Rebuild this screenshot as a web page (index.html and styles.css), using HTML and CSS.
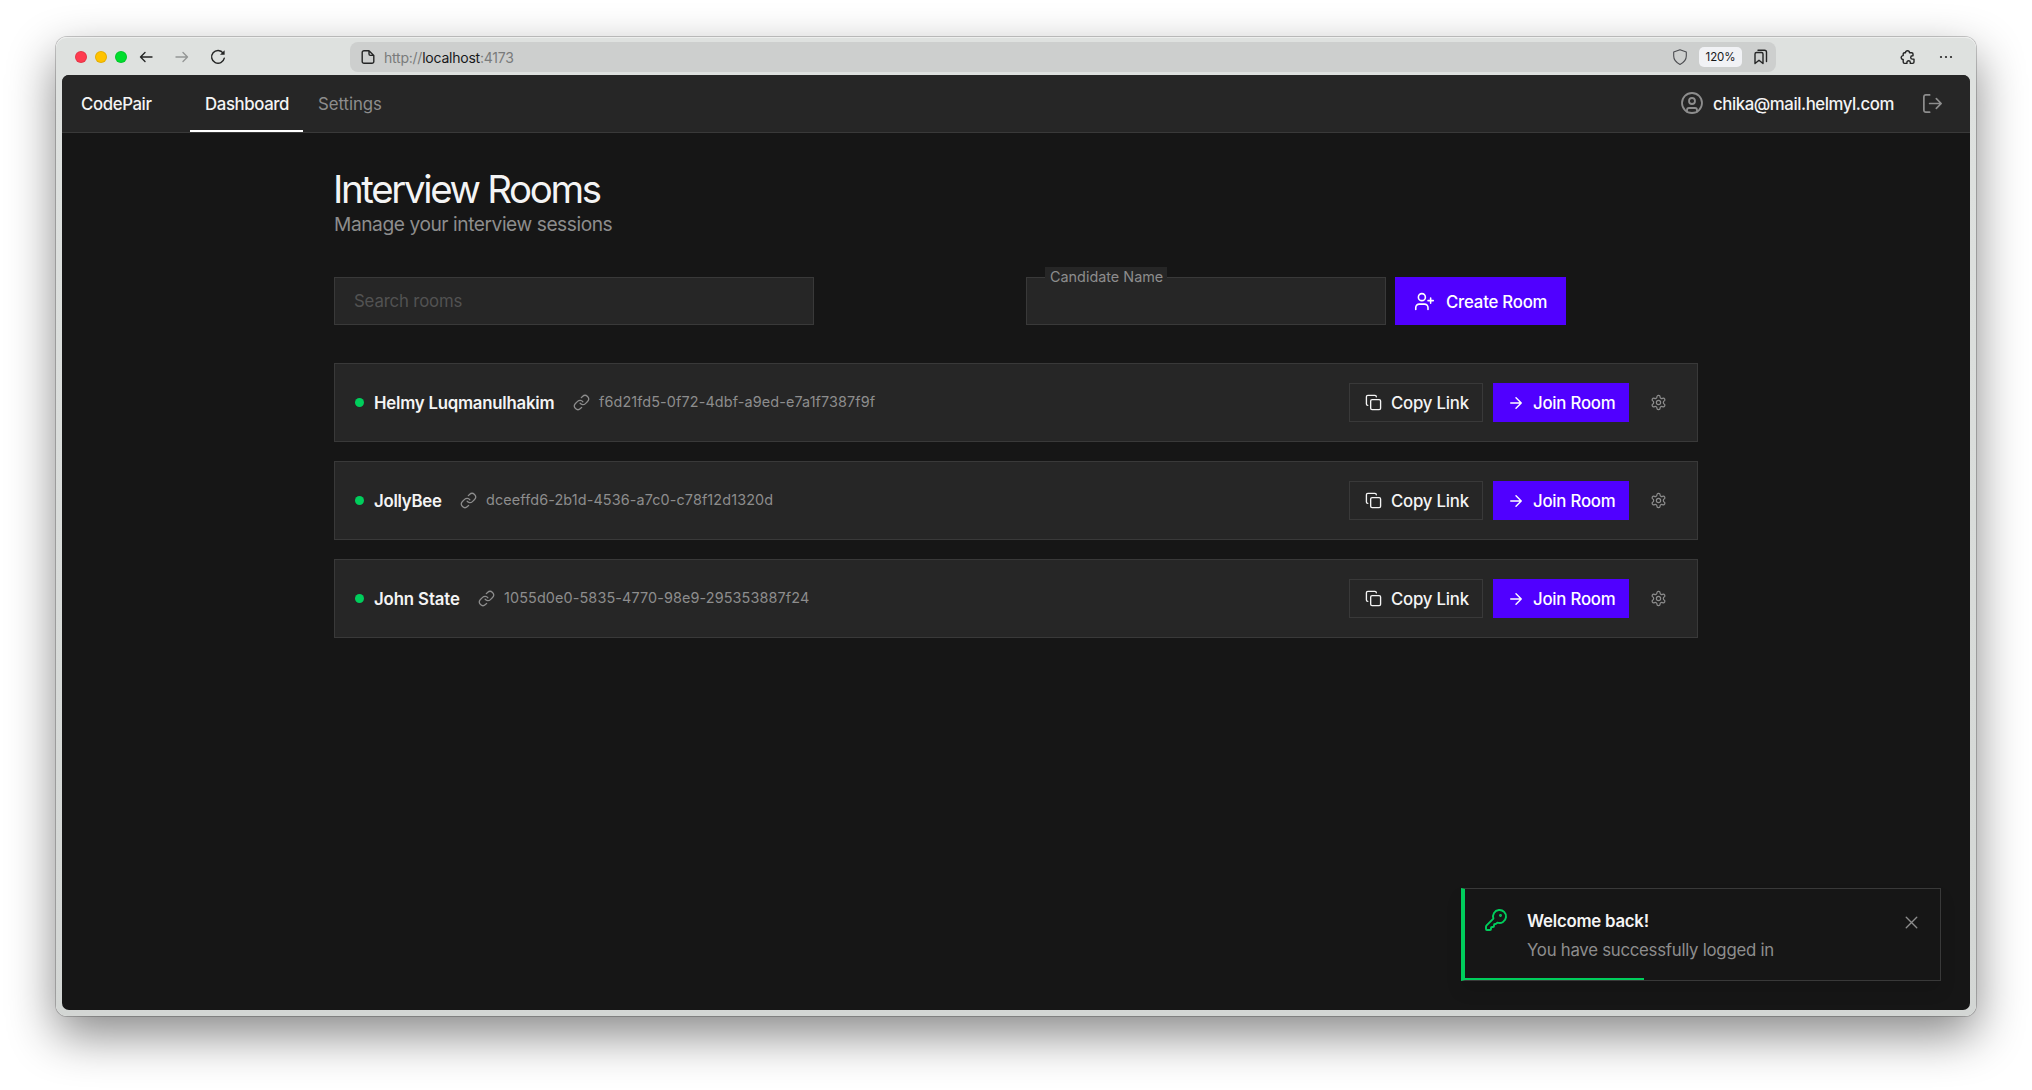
FILE: index.html
```html
<!DOCTYPE html>
<html lang="en">
<head>
<meta charset="utf-8">
<title>CodePair</title>
<link rel="stylesheet" href="styles.css">
</head>
<body>
<svg class="sprite" width="0" height="0" aria-hidden="true">
  <symbol id="link" viewBox="0 0 24 24"><path d="M10 13a5 5 0 0 0 7.54.54l3-3a5 5 0 0 0-7.07-7.07l-1.72 1.71"/><path d="M14 11a5 5 0 0 0-7.54-.54l-3 3a5 5 0 0 0 7.07 7.07l1.71-1.71"/></symbol>
  <symbol id="copy" viewBox="0 0 24 24"><rect x="8" y="8" width="14" height="14" rx="2"/><path d="M4 16c-1.1 0-2-.9-2-2V4c0-1.1.9-2 2-2h10c1.1 0 2 .9 2 2"/></symbol>
  <symbol id="arrow" viewBox="0 0 24 24"><path d="M5 12h14M12 5l7 7-7 7"/></symbol>
  <symbol id="gear" viewBox="0 0 24 24"><path d="M12.22 2h-.44a2 2 0 0 0-2 2v.18a2 2 0 0 1-1 1.73l-.43.25a2 2 0 0 1-2 0l-.15-.08a2 2 0 0 0-2.73.73l-.22.38a2 2 0 0 0 .73 2.73l.15.1a2 2 0 0 1 1 1.72v.51a2 2 0 0 1-1 1.74l-.15.09a2 2 0 0 0-.73 2.73l.22.38a2 2 0 0 0 2.73.73l.15-.08a2 2 0 0 1 2 0l.43.25a2 2 0 0 1 1 1.73V20a2 2 0 0 0 2 2h.44a2 2 0 0 0 2-2v-.18a2 2 0 0 1 1-1.73l.43-.25a2 2 0 0 1 2 0l.15.08a2 2 0 0 0 2.73-.73l.22-.39a2 2 0 0 0-.73-2.73l-.15-.08a2 2 0 0 1-1-1.74v-.5a2 2 0 0 1 1-1.74l.15-.09a2 2 0 0 0 .73-2.73l-.22-.38a2 2 0 0 0-2.73-.73l-.15.08a2 2 0 0 1-2 0l-.43-.25a2 2 0 0 1-1-1.73V4a2 2 0 0 0-2-2z"/><circle cx="12" cy="12" r="3"/></symbol>
</svg>
<div class="window">
  <div class="toolbar">
    <div class="lights"><i class="light red"></i><i class="light yellow"></i><i class="light green"></i></div>
    <svg class="tool back" viewBox="0 0 16 16"><path d="M14 8H2.5M7 3.5L2.5 8 7 12.5"/></svg>
    <svg class="tool forward" viewBox="0 0 16 16"><path d="M2 8h11.5M9 3.5L13.5 8 9 12.5"/></svg>
    <svg class="tool reload" viewBox="0 0 16 16"><path d="M13.2 4.1A6.4 6.4 0 1 0 14.3 9.2"/><path d="M14.6 1.2v4.6H10z" fill="currentColor" stroke="none"/></svg>
    <div class="address">
      <svg class="tool" viewBox="0 0 16 16"><path d="M9 1.8H4a1.8 1.8 0 0 0-1.8 1.8v8.8A1.8 1.8 0 0 0 4 14.2h8a1.8 1.8 0 0 0 1.8-1.8V6.4zM9 1.8v3.2a1.4 1.4 0 0 0 1.4 1.4h3.4"/></svg>
      <span class="url">http://<b>localhost</b>:4173</span>
      <svg class="tool shield" viewBox="0 0 16 16"><path d="M8 .8L14.3 3.1V7c0 3.8-2.4 6.5-6.3 8.4C4.1 13.5 1.7 10.8 1.7 7V3.1z"/></svg>
      <span class="zoom">120%</span>
      <svg class="tool marks" viewBox="0 0 16 16"><path d="M2 5a1.5 1.5 0 0 1 1.5-1.5h5A1.5 1.5 0 0 1 10 5v9.500l-4-3.200-4 3.200zM5 1.200h6.500A2 2 0 0 1 13.500 3.200v9.300"/></svg>
    </div>
    <svg class="tool puzzle" viewBox="0 0 16 16"><path d="M5.500 3.700a2 2 0 0 1 4 0h2.200A1.300 1.300 0 0 1 13 5v1.700h-.6a1.700 1.700 0 0 0 0 3.400H14v2.900a1.400 1.400 0 0 1-1.400 1.400h-2.300v-.9a1.700 1.700 0 0 0-3.400 0v.9H4.600a1.400 1.400 0 0 1-1.400-1.400v-2.500H2.700a2 2 0 0 1 0-3.900h.5V5a1.300 1.300 0 0 1 1.300-1.300z"/></svg>
    <svg class="tool more" viewBox="0 0 16 16"><circle cx="3" cy="8" r="1.1"/><circle cx="8" cy="8" r="1.1"/><circle cx="13" cy="8" r="1.1"/></svg>
  </div>
  <div class="page">
    <header class="header">
      <span class="brand">CodePair</span>
      <nav class="tabs"><a class="tab active">Dashboard</a><a class="tab">Settings</a></nav>
      <svg class="icon user" viewBox="0 0 24 24"><circle cx="12" cy="12" r="10"/><circle cx="12" cy="10" r="3"/><path d="M7 20.662V19a2 2 0 0 1 2-2h6a2 2 0 0 1 2 2v1.662"/></svg>
      <span class="email">chika@mail.helmyl.com</span>
      <svg class="icon logout" viewBox="0 0 24 24"><path d="M9 21H5a2 2 0 0 1-2-2V5a2 2 0 0 1 2-2h4M16 17l5-5-5-5M21 12H9"/></svg>
    </header>
    <main class="main">
      <h1 class="title">Interview Rooms</h1>
      <p class="subtitle">Manage your interview sessions</p>
      <div class="controls">
        <div class="search">Search rooms</div>
        <div class="create">
          <div class="field"><span class="label">Candidate Name</span></div>
          <button class="button primary big"><svg class="icon" viewBox="0 0 24 24"><path d="M16 21v-2a4 4 0 0 0-4-4H6a4 4 0 0 0-4 4v2M19 8v6M22 11h-6"/><circle cx="9" cy="7" r="4"/></svg><span>Create Room</span></button>
        </div>
      </div>
      <section class="rooms">
        <article class="room">
          <i class="dot"></i><span class="name helmy">Helmy Luqmanulhakim</span>
          <svg class="icon chain"><use href="#link"/></svg><span class="code">f6d21fd5-0f72-4dbf-a9ed-e7a1f7387f9f</span>
          <button class="button copy"><svg class="icon"><use href="#copy"/></svg><span>Copy Link</span></button>
          <button class="button primary join"><svg class="icon"><use href="#arrow"/></svg><span>Join Room</span></button>
          <svg class="icon gear"><use href="#gear"/></svg>
        </article>
        <article class="room">
          <i class="dot"></i><span class="name jolly">JollyBee</span>
          <svg class="icon chain"><use href="#link"/></svg><span class="code">dceeffd6-2b1d-4536-a7c0-c78f12d1320d</span>
          <button class="button copy"><svg class="icon"><use href="#copy"/></svg><span>Copy Link</span></button>
          <button class="button primary join"><svg class="icon"><use href="#arrow"/></svg><span>Join Room</span></button>
          <svg class="icon gear"><use href="#gear"/></svg>
        </article>
        <article class="room">
          <i class="dot"></i><span class="name john">John State</span>
          <svg class="icon chain"><use href="#link"/></svg><span class="code">1055d0e0-5835-4770-98e9-295353887f24</span>
          <button class="button copy"><svg class="icon"><use href="#copy"/></svg><span>Copy Link</span></button>
          <button class="button primary join"><svg class="icon"><use href="#arrow"/></svg><span>Join Room</span></button>
          <svg class="icon gear"><use href="#gear"/></svg>
        </article>
      </section>
    </main>
    <aside class="toast">
      <svg class="icon key" viewBox="0 0 24 24"><path d="M2.586 17.414A2 2 0 0 0 2 18.828V21a1 1 0 0 0 1 1h3a1 1 0 0 0 1-1v-1a1 1 0 0 1 1-1h1a1 1 0 0 0 1-1v-1a1 1 0 0 1 1-1h.172a2 2 0 0 0 1.414-.586l.814-.814a6.5 6.5 0 1 0-4-4z"/><circle cx="16.5" cy="7.5" r=".5" fill="currentColor"/></svg>
      <div class="toast-text"><strong class="toast-title">Welcome back!</strong><span class="toast-body">You have successfully logged in</span></div>
      <svg class="icon close" viewBox="0 0 24 24"><path d="M18 6L6 18M6 6l12 12"/></svg>
      <i class="progress"></i>
    </aside>
  </div>
</div>
</body>
</html>
```
FILE: styles.css
```css
* { box-sizing: border-box; }
body {
  margin: 0;
  height: 1090px;
  padding: 37px 56px 0;
  overflow: hidden;
  background: #fff;
  font-family: Inter, "Liberation Sans", sans-serif;
  font-size: 16.8px;
  color: #f4f4f4;
}
.sprite { position: absolute; }
svg { flex: none; }
.window {
  width: 1920px;
  height: 979px;
  padding: 0 6px 6px;
  display: flex;
  flex-direction: column;
  border-radius: 11px;
  background: linear-gradient(#dee1df 0, #dee1df 60px, #d3d6d4);
  box-shadow: inset 0 1px 0 rgba(255,255,255,.45), 0 0 0 1px rgba(0,0,0,.2), 0 19px 48px rgba(0,0,0,.47);
}

/* Browser toolbar */
.toolbar { height: 38px; padding: 2px 0 0 13px; display: flex; align-items: center; }
.lights { display: flex; gap: 8px; }
.light { width: 12px; height: 12px; border-radius: 50%; border: 1px solid rgba(0,0,0,.1); }
.red { background: #ff3b50; }
.yellow { background: #ffc300; }
.green { background: #00de2d; }
.tool { width: 16px; height: 16px; fill: none; stroke: currentColor; stroke-width: 1.4; stroke-linecap: round; stroke-linejoin: round; color: #242525; }
.back { margin-left: 11px; }
.forward { margin-left: 20px; color: #949696; }
.reload { margin-left: 20px; }
.address {
  width: 1426px; height: 30px; margin-left: 124px; padding: 0 7px 0 10px;
  display: flex; align-items: center;
  border-radius: 8px; background: #cdcfce;
}
.url { flex: 1; margin-left: 8px; padding-top: 1px; font-size: 14px; letter-spacing: -.23px; color: #797b7b; }
.url b { font-weight: 400; color: #17171a; }
.shield { stroke-width: 1.1; color: #4b4c50; }
.zoom { width: 43px; height: 20px; margin: 0 11px; border-radius: 5px; background: #f1f2f5; color: #17171a; font-size: 11.5px; line-height: 20px; text-align: center; letter-spacing: -.1px; }
.puzzle { margin-left: 124px; }
.more { margin-left: 22px; fill: currentColor; stroke: none; }

/* Application */
.page { position: relative; flex: 1; overflow: hidden; border-radius: 7px; background: #161616; }
.icon { width: 17px; height: 17px; fill: none; stroke: currentColor; stroke-width: 1.9; stroke-linecap: round; stroke-linejoin: round; }
.header { height: 58px; padding: 0 26px 0 19px; display: flex; align-items: center; background: #262626; border-bottom: 1px solid #393939; }
.brand { width: 109px; padding-top: 1px; font-weight: 500; letter-spacing: -.38px; }
.tabs { flex: 1; align-self: stretch; display: flex; }
.tab { padding: 1px 15px 0; display: flex; align-items: center; color: #8d8d8d; letter-spacing: -.05px; }
.active { width: 113px; font-weight: 500; color: #f4f4f4; letter-spacing: -.38px; box-shadow: inset 0 -2px #fff; }
.user { width: 24px; height: 24px; margin-top: -1px; stroke-width: 1.8; color: #8d8d8d; }
.email { width: 182px; margin: 0 26px 0 9px; padding-top: 1px; font-weight: 500; letter-spacing: -.43px; white-space: nowrap; }
.logout { width: 23px; height: 23px; stroke-width: 1.8; color: #8d8d8d; }

.main { width: 1364px; margin: 0 auto; padding-top: 33px; }
.title { margin: 0 0 -1px -1px; font-size: 38.4px; font-weight: 400; line-height: 46px; letter-spacing: -2.32px; }
.subtitle { margin: 0; font-size: 19.2px; line-height: 27px; letter-spacing: -.45px; color: #8d8d8d; }
.controls { margin-top: 39px; display: grid; grid-template-columns: 673px 1fr; gap: 19px; }
.search { width: 480px; height: 48px; padding: 0 19px; border: 1px solid #393939; background: #262626; color: #525252; line-height: 47px; letter-spacing: -.16px; }
.create { display: flex; gap: 9px; }
.field { position: relative; width: 360px; height: 48px; border: 1px solid #393939; background: #262626; }
.label { position: absolute; left: 18px; top: -11px; width: 122px; padding-left: 5px; background: #262626; color: #8d8d8d; font-size: 14.4px; line-height: 19px; }
.button { margin: 0; padding: 0; display: flex; align-items: center; border: 0; background: none; color: #f4f4f4; font: 500 16.8px/20px Inter, sans-serif; white-space: nowrap; letter-spacing: -.22px; }
.button span { padding-top: 1px; }
.primary { background: #5000ff; color: #fff; }
.big { width: 171px; height: 48px; padding-left: 19px; }
.big .icon { width: 21px; height: 21px; margin-right: 11px; stroke-width: 1.8; }

.rooms { margin-top: 38px; display: grid; gap: 19px; }
.room { height: 79px; padding: 0 30px 0 20px; display: flex; align-items: center; border: 1px solid #393939; background: #262626; }
.dot { width: 9px; height: 9px; margin-right: 10px; border-radius: 50%; background: #00ce5c; }
.name { font-weight: 600; margin-right: 19px; white-space: nowrap; }
.helmy { width: 180px; letter-spacing: -.23px; }
.jolly { width: 67px; letter-spacing: -.25px; }
.john { width: 85px; letter-spacing: -.12px; }
.chain { color: #8d8d8d; stroke-width: 1.8; }
.code { flex: 1; margin: -2px 0 0 9px; font-size: 14.4px; letter-spacing: .12px; color: #8d8d8d; }
.copy { width: 134px; height: 39px; padding-left: 15px; border: 1px solid #393939; }
.copy .icon { margin-right: 9px; }
.join { width: 136px; height: 39px; margin-left: 10px; padding-left: 14px; }
.join .icon { width: 18px; height: 18px; margin-right: 8px; }
.gear { margin-left: 21px; color: #8d8d8d; stroke-width: 1.7; }

/* Notification */
.toast {
  position: absolute; right: 29px; bottom: 29px; width: 480px; height: 93px;
  padding: 19px 18px 0 19px; display: flex;
  border: 1px solid #393939; border-left: 4px solid #00ce5c; background: #161616;
  box-shadow: 0 10px 15px rgba(0,0,0,.1);
}
.key { width: 24px; height: 24px; color: #00ce5c; }
.toast-text { flex: 1; margin: -1px 0 0 19px; display: flex; flex-direction: column; line-height: 29px; }
.toast-title { font-weight: 600; letter-spacing: -.23px; }
.toast-body { letter-spacing: -.26px; color: #8d8d8d; }
.close { width: 21px; height: 21px; margin-top: 4px; stroke-width: 1.6; color: #8d8d8d; }
.progress { position: absolute; left: 0; bottom: 0; width: 179px; height: 2px; background: #00ce5c; }
```
